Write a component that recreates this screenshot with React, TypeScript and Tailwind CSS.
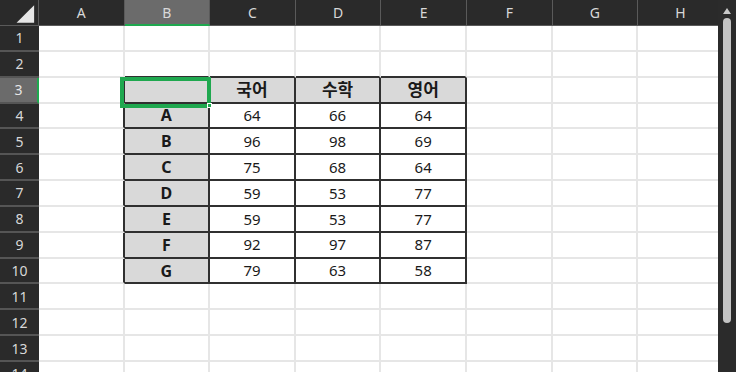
import React from 'react';

const COLS = ['A', 'B', 'C', 'D', 'E', 'F', 'G', 'H'];
const ROW_COUNT = 14;

// table sits at B3:E10
const heads = ['국어', '수학', '영어'];
const names = ['A', 'B', 'C', 'D', 'E', 'F', 'G'];
const scores = [
  [64, 66, 64],
  [96, 98, 69],
  [75, 68, 64],
  [59, 53, 77],
  [59, 53, 77],
  [92, 97, 87],
  [79, 63, 58],
];

const inTable = (r: number, c: number) => r >= 3 && r <= 10 && c >= 1 && c <= 4;

function cellText(r: number, c: number): { text: string; bold: boolean; gray: boolean; kr?: boolean } | null {
  if (!inTable(r, c)) return null;
  if (r === 3) return { text: c === 1 ? '' : heads[c - 2], bold: true, gray: true, kr: true };
  if (c === 1) return { text: names[r - 4], bold: true, gray: true };
  return { text: String(scores[r - 4][c - 2]), bold: false, gray: false };
}

function Cell({ r, c }: { r: number; c: number }) {
  const info = cellText(r, c);
  const darkRight = inTable(r, c) || inTable(r, c + 1);
  const darkBottom = inTable(r, c) || inTable(r + 1, c);
  return (
    <div
      className={[
        'w-[85.6px] shrink-0 h-full flex items-center justify-center border-r-2 border-b-2',
        darkRight ? 'border-r-[#303030]' : 'border-r-[#e6e6e6]',
        darkBottom ? 'border-b-[#303030]' : 'border-b-[#e6e6e6]',
        info?.gray ? 'bg-[#d9d9d9]' : 'bg-white',
        info?.kr ? 'font-bold text-[17px]' : info?.bold ? 'font-bold text-[16px]' : 'text-[15px]',
      ].join(' ')}
    >
      {info?.text}
    </div>
  );
}

export default function App() {
  return (
    <div className="w-[736px] h-[372px] overflow-hidden flex bg-white text-[#1a1a1a] font-['Noto_Sans','Noto_Sans_CJK_KR',sans-serif]">
      <div className="relative flex-1 overflow-hidden">
        {/* column header */}
        <div className="flex h-[26px] bg-[#2a2a2a] text-[#d8d8d8] text-[14px]">
          <div className="w-[39px] shrink-0 border-r border-b border-[#5a5a5a] flex items-center justify-center">
            <svg width="39" height="26" viewBox="0 0 39 26">
              <polygon points="35,5 35,23 17,23" fill="#e6e6e6" />
            </svg>
          </div>
          {COLS.map((col) =>
            col === 'B' ? (
              <div key={col} className="w-[85.6px] shrink-0 bg-[#6b6b6b] border-r border-[#5a5a5a] border-b-2 border-b-[#1fa84f] flex items-center justify-center">
                {col}
              </div>
            ) : (
              <div key={col} className="w-[85.6px] shrink-0 border-r border-b border-[#5a5a5a] flex items-center justify-center">
                {col}
              </div>
            )
          )}
        </div>

        {Array.from({ length: ROW_COUNT }, (_, i) => i + 1).map((r) => (
          <div key={r} className="flex h-[25.85px]">
            {r === 3 ? (
              <div className="w-[39px] shrink-0 bg-[#6b6b6b] text-[#e6e6e6] text-[14px] border-b-2 border-[#555555] border-r-2 border-r-[#1fa84f] flex items-center justify-center">
                {r}
              </div>
            ) : (
              <div className="w-[39px] shrink-0 bg-[#2a2a2a] text-[#d8d8d8] text-[14px] border-b-2 border-[#555555] flex items-center justify-center">
                {r}
              </div>
            )}
            {COLS.map((_, c) => (
              <Cell key={c} r={r} c={c} />
            ))}
          </div>
        ))}

        {/* active cell B3 */}
        <div className="absolute left-[120px] top-[77px] w-[91px] h-[31px] border-4 border-[#1fa84f]" />
        <div className="absolute left-[207px] top-[103px] w-[5px] h-[5px] bg-[#1fa84f] border border-white" />
      </div>

      {/* vertical scrollbar */}
      <div className="w-[18px] shrink-0 bg-[#2b2b2b] flex flex-col items-center pt-[8px]">
        <svg width="8" height="6" viewBox="0 0 8 6">
          <polygon points="4,0 8,6 0,6" fill="#c8c8c8" />
        </svg>
        <div className="mt-[4px] w-[8px] h-[305px] rounded-full bg-[#c4c4c4]" />
      </div>
    </div>
  );
}
